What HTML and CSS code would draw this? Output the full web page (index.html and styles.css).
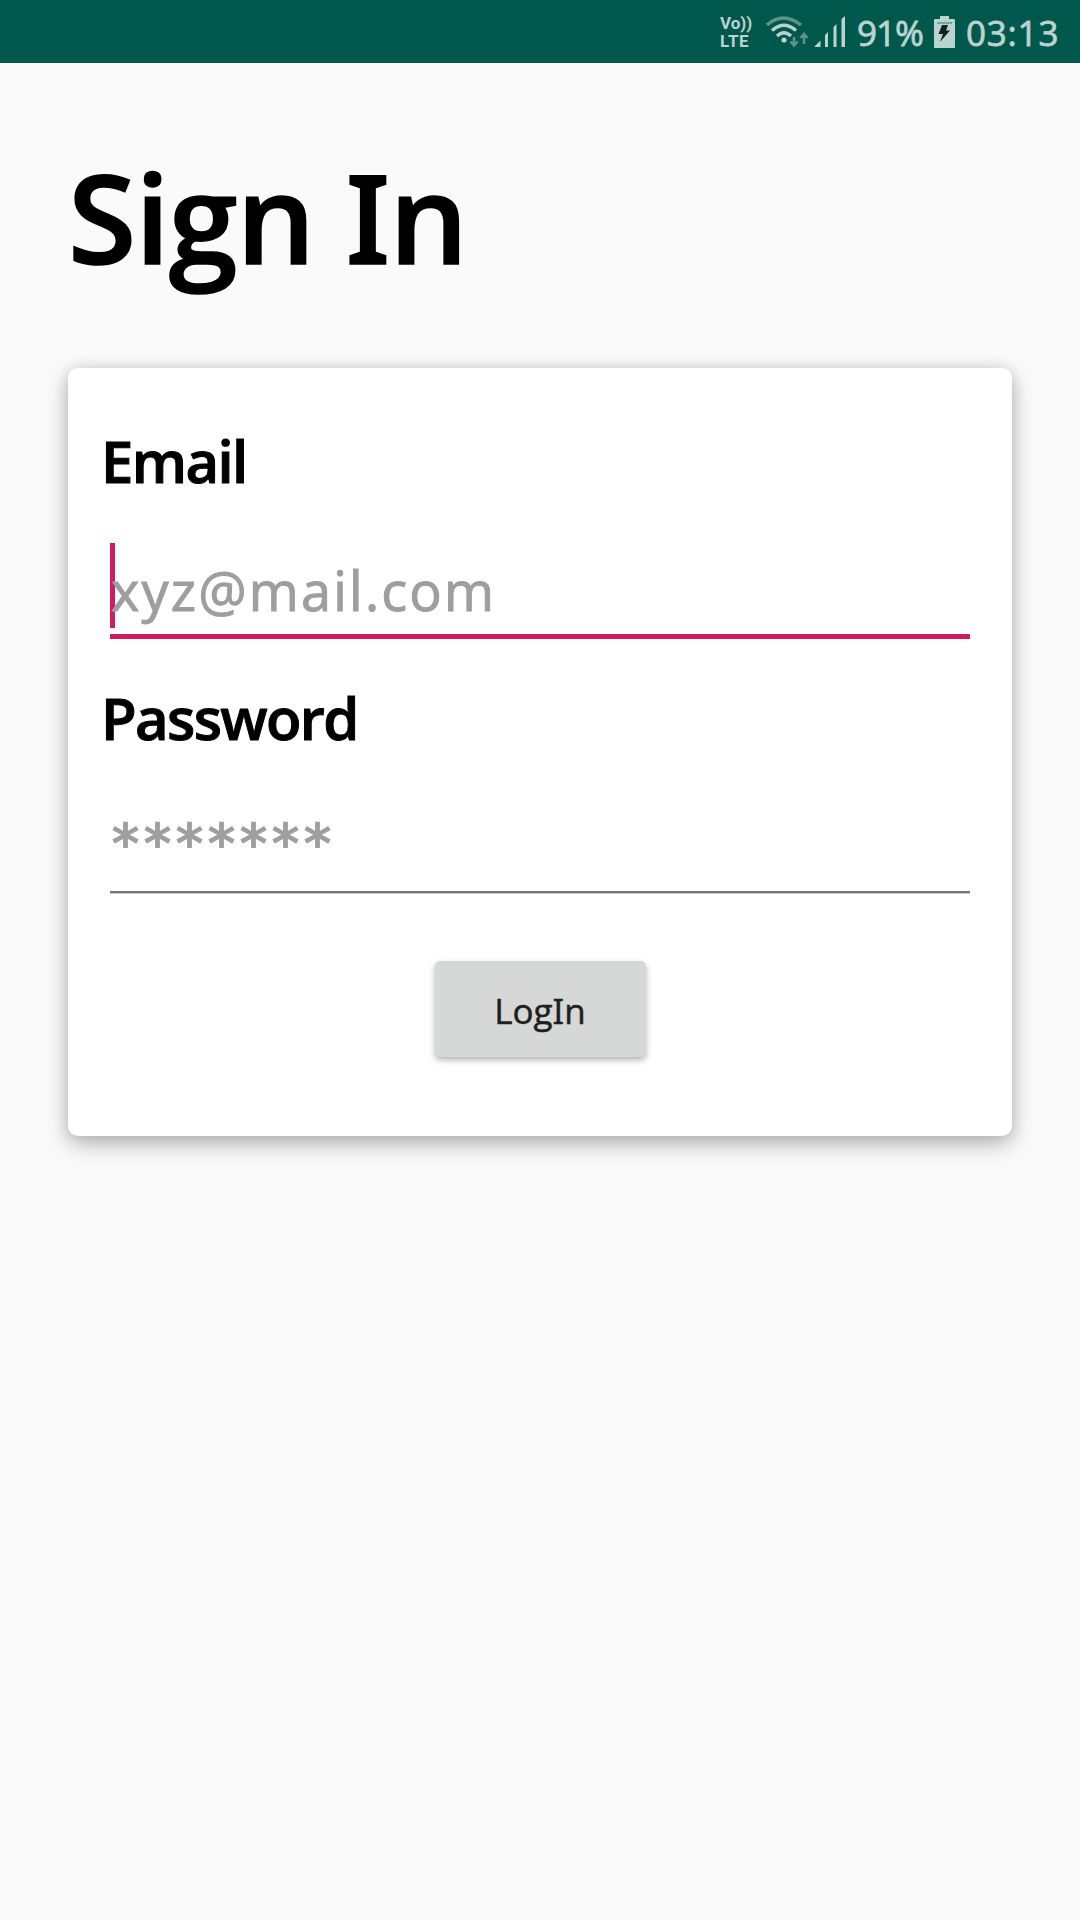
FILE: index.html
```html
<!DOCTYPE html>
<html lang="en">
<head>
<meta charset="utf-8">
<title>Sign In</title>
<link rel="stylesheet" href="styles.css">
</head>
<body>
<header class="status">
  <div class="volte"><span>Vo))</span><span class="lte">LTE</span></div>
  <svg class="wifi" width="44" height="34" viewBox="0 0 44 34" fill="none" stroke="#bbd3cf" stroke-width="3.4">
    <path d="M1 9Q17 -5 35 9" stroke="#5b948c"/>
    <path d="M6 14.500Q18 4 30 14.500"/>
    <path d="M11 20Q18 13.500 25 20"/>
    <circle cx="18" cy="24" r="2.600" fill="#bbd3cf" stroke="none"/>
    <path d="M28 21v8M24.500 25.500l3.500 4 3.500-4M38 28V18M34.500 22l3.500-4 3.500 4" stroke="#5b948c" stroke-width="2.600"/>
  </svg>
  <svg class="signal" width="32" height="32" viewBox="0 0 32 32" fill="#bbd3cf">
    <path d="M0 31L6.500 24.500V31ZM11 19L14 16V31H11ZM19.500 11L22.500 8V31H19.500ZM27.500 3L31 0V31H27.500Z"/>
  </svg>
  <span class="percent">91%</span>
  <svg class="battery" width="21" height="32" viewBox="0 0 21 32">
    <path d="M6 3V0H15V3H20Q21 3 21 4V31Q21 32 20 32H1Q0 32 0 31V4Q0 3 1 3Z" fill="#bbd3cf"/>
    <path d="M3 7H18" stroke="#5b948c" stroke-width="1.500"/>
    <path d="M8 9H14L12 14.500H16L6 26L9 18H4.500Z" fill="#14201e"/>
  </svg>
  <span class="clock">03:13</span>
</header>
<main class="page">
  <h1 class="title">Sign <span class="serif-i">In</span></h1>
  <form class="card">
    <label class="label">Email</label>
    <div class="field focused"><span class="hint email">xyz@mail.com</span></div>
    <label class="label label-password">Password</label>
    <div class="field">
      <span class="hint stars">*******</span>
    </div>
    <button class="login" type="button">Log<span class="serif-i">In</span></button>
  </form>
</main>
</body>
</html>
```
FILE: styles.css
```css
* { box-sizing: border-box; }
body {
  margin: 0;
  min-height: 1920px;
  background: #fafafa;
  color: #000;
  font-family: "Open Sans", "Noto Sans", sans-serif;
}
.status {
  display: flex;
  align-items: flex-start;
  height: 63px;
  padding: 16px 0 0 720px;
  background: #00574b;
  color: #bbd3cf;
  white-space: nowrap;
}
.volte {
  display: flex;
  flex-direction: column;
  width: 46px;
  margin-top: -2px;
  font-family: Roboto, sans-serif;
  font-size: 17px;
  font-weight: 700;
  line-height: 18px;
}
.lte { letter-spacing: .6px; }
.wifi { width: 44px; flex: none; }
.signal { margin-left: 4px; flex: none; }
.percent, .clock {
  font-size: 35px;
  line-height: 36px;
  -webkit-text-stroke: .8px currentColor;
}
.percent { width: 66px; margin-left: 11px; margin-top: -1px; letter-spacing: -1px; }
.battery { margin-left: 11px; flex: none; }
.clock { margin-left: 11px; margin-top: -1px; letter-spacing: .8px; }
.serif-i { font-feature-settings: "salt", "ss01"; }
.page { padding: 0 68px; }
.title {
  margin: 0;
  padding-top: 59px;
  height: 305px;
  font-size: 124px;
  font-weight: 600;
  line-height: 188px;
  letter-spacing: -1px;
  -webkit-text-stroke: 1.5px currentColor;
}
.card {
  display: flex;
  flex-direction: column;
  height: 768px;
  padding: 51px 42px 0;
  border-radius: 10px;
  background: #fff;
  box-shadow: 0 8px 22px rgba(0,0,0,.28), 0 0 14px rgba(0,0,0,.1);
}
.label {
  height: 84px;
  margin-left: -9px;
  font-size: 58px;
  font-weight: 600;
  line-height: 84px;
  letter-spacing: -1.6px;
  -webkit-text-stroke: 1px currentColor;
}
.field {
  height: 94px;
  margin-top: 39px;
  border-bottom: 2px solid #757575;
  box-shadow: 0 1px #c8c8c8;
}
.focused {
  height: 96px;
  margin-top: 40px;
  border-bottom: 5px solid #d11b60;
  box-shadow: none;
}
.hint {
  display: block;
  height: 85px;
  font-size: 54px;
  line-height: 91px;
  color: #9e9e9e;
  -webkit-text-stroke: 1px currentColor;
}
.email {
  border-left: 5px solid #d11b60;
  line-height: 94px;
  letter-spacing: 2.2px;
  text-indent: -4px;
}
.label-password { margin-top: 37px; }
.stars {
  margin-left: 2px;
  font-family: "DejaVu Sans", sans-serif;
  line-height: 89px;
  letter-spacing: 5px;
  -webkit-text-stroke: 1.8px currentColor;
}
.login {
  align-self: center;
  width: 211px;
  height: 96px;
  margin: 68px 0 0;
  padding: 4px 0 0;
  border: 0;
  border-radius: 5px;
  background: #d6d8d7;
  box-shadow: 0 3px 6px rgba(0,0,0,.3);
  color: #1e1f1f;
  font: 35px/92px "Open Sans", sans-serif;
  -webkit-text-stroke: .5px currentColor;
}
```
